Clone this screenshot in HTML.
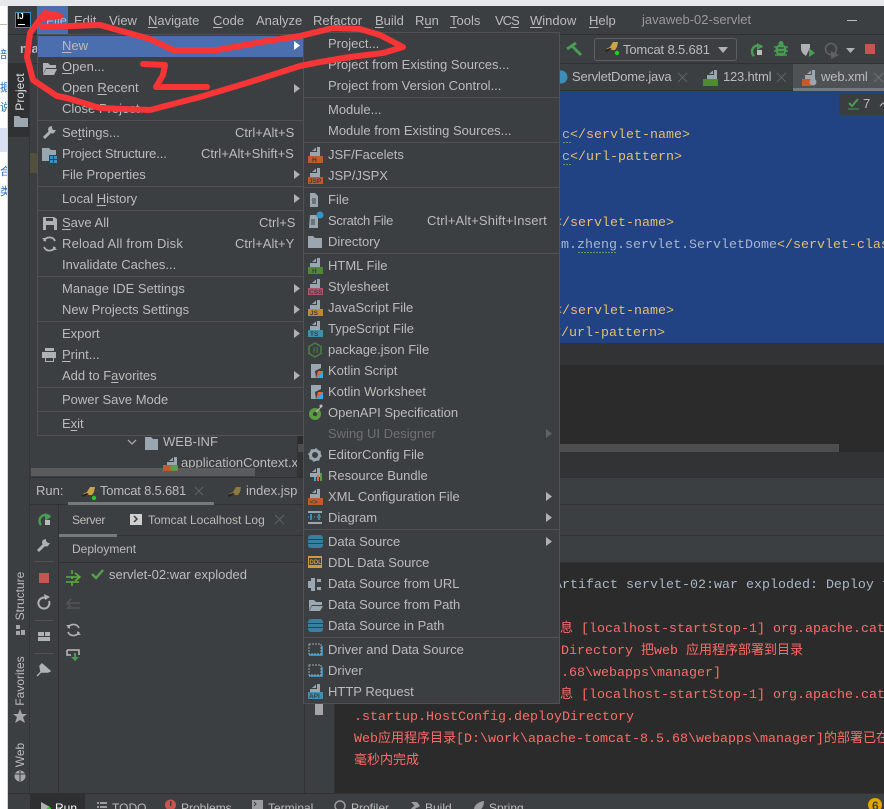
<!DOCTYPE html>
<html><head><meta charset="utf-8"><style>
html,body{margin:0;padding:0;width:884px;height:809px;overflow:hidden;background:#fff}
body{position:relative;font:13px/16px "Liberation Sans","Noto Sans CJK SC",sans-serif;color:#bbb}
div,span.t,svg{position:absolute}
.t{position:absolute;white-space:nowrap;line-height:16px;height:16px}
.c{position:absolute;white-space:pre;font:13.33px/16px "Liberation Mono","Noto Sans CJK SC",monospace;height:16px}
.c i{font:13px/0 "Noto Sans CJK SC",sans-serif}
.g{color:#a9b7c6}.y{color:#e8bf6a}.r{color:#ff6b68}
.sp{position:absolute;height:1px;background:#515151}
.v{position:absolute;white-space:nowrap;transform:rotate(-90deg);transform-origin:center;line-height:14px;height:14px;text-align:center;font-size:12px}
u{text-decoration-thickness:1px;text-underline-offset:2px}
</style></head><body>
<div style="left:0;top:0;width:884px;height:6px;background:#e6e8ea"></div>
<div style="left:0;top:6px;width:8px;height:803px;background:#fff"></div>
<div style="left:7px;top:6px;width:1px;height:803px;background:#d5d5d5"></div>
<div style="left:0;top:24px;width:7px;height:1px;background:#bbb"></div>
<div style="left:0;top:128px;width:7px;height:24px;background:#d9e1f2"></div>
<div class="t" style="left:0;top:47px;width:7px;overflow:hidden;color:#2a6fc0;font-size:11px">部</div>
<div class="t" style="left:0;top:80px;width:7px;overflow:hidden;color:#2a6fc0;font-size:11px">据</div>
<div class="t" style="left:0;top:100px;width:7px;overflow:hidden;color:#2a6fc0;font-size:11px">说</div>
<div class="t" style="left:0;top:164px;width:7px;overflow:hidden;color:#2a6fc0;font-size:11px">合</div>
<div class="t" style="left:0;top:184px;width:7px;overflow:hidden;color:#2a6fc0;font-size:11px">类</div>

<!-- window -->
<div style="left:8px;top:6px;width:876px;height:803px;background:#3c3f41"></div>
<div style="left:8px;top:34px;width:876px;height:1px;background:#2f3133"></div>
<div style="left:8px;top:63px;width:876px;height:1px;background:#2f3133"></div>
<div style="left:8px;top:63px;width:21px;height:74px;background:#2f3133"></div>
<div style="left:29px;top:63px;width:1px;height:730px;background:#323436"></div>
<div class="t" style="left:20px;top:41px;width:18px;overflow:hidden;color:#bbb;font-weight:bold">ma</div>

<!-- title bar -->
<div style="left:37px;top:6px;width:31px;height:28px;background:#4b6eaf"></div>
<div class="t" style="left:46px;top:13px;color:#bbb"><u>F</u>ile</div>
<div class="t" style="left:74px;top:13px">Edit</div>
<div class="t" style="left:109px;top:13px">View</div>
<div class="t" style="left:148px;top:13px"><u>N</u>avigate</div>
<div class="t" style="left:213px;top:13px"><u>C</u>ode</div>
<div class="t" style="left:256px;top:13px">Analyze</div>
<div class="t" style="left:313px;top:13px">Refactor</div>
<div class="t" style="left:375px;top:13px"><u>B</u>uild</div>
<div class="t" style="left:415px;top:13px">R<u>u</u>n</div>
<div class="t" style="left:450px;top:13px"><u>T</u>ools</div>
<div class="t" style="left:495px;top:13px;letter-spacing:-1px">VC<u>S</u></div>
<div class="t" style="left:530px;top:13px"><u>W</u>indow</div>
<div class="t" style="left:589px;top:13px"><u>H</u>elp</div>
<div class="t" style="left:642px;top:12px;color:#999;">javaweb-02-servlet</div>
<div style="left:847px;top:20px;width:10px;height:1px;background:#bbb"></div>
<div style="left:15px;top:12px;width:14px;height:14px;background:#000;border:1px solid #3592c4"></div>
<div class="t" style="left:17px;top:11px;color:#fff;font-size:8px;font-weight:bold;line-height:12px">IJ</div>
<div style="left:18px;top:24px;width:7px;height:1px;background:#fff"></div>

<!-- toolbar -->
<div style="left:594px;top:38px;width:141px;height:21px;border:1px solid #5e6060;border-radius:3px"></div>
<div class="t" style="left:623px;top:42px;letter-spacing:-.15px">Tomcat 8.5.681</div>

<!-- tabs -->
<div style="left:559px;top:90px;width:325px;height:1px;background:#323232"></div>
<div style="left:793px;top:64px;width:91px;height:26px;background:#4e5254"></div>
<div style="left:793px;top:88px;width:91px;height:3px;background:#747a80"></div>
<div class="t" style="left:572px;top:69px;letter-spacing:-.2px">ServletDome.java</div>
<div class="t" style="left:723px;top:69px;letter-spacing:-.2px">123.html</div>
<div class="t" style="left:821px;top:69px;letter-spacing:-.15px">web.xml</div>

<!-- editor -->
<div style="left:304px;top:91px;width:580px;height:252px;background:#214283;overflow:hidden">
 <div class="c" style="left:258px;top:37px"><span class="g">c</span><span class="y">&lt;/servlet-name&gt;</span></div>
 <div class="c" style="left:258px;top:59px"><span class="g">c</span><span class="y">&lt;/url-pattern&gt;</span></div>
 <div class="c" style="left:242px;top:125px"><span class="g">t</span><span class="y">&lt;/servlet-name&gt;</span></div>
 <div class="c" style="left:249px;top:147px"><span class="g">om.zheng.servlet.ServletDome</span><span class="y">&lt;/servlet-class&gt;</span></div>
 <div class="c" style="left:242px;top:213px"><span class="g">t</span><span class="y">&lt;/servlet-name&gt;</span></div>
 <div class="c" style="left:241px;top:235px"><span class="g">t</span><span class="y">&lt;/url-pattern&gt;</span></div>
 <div style="left:535px;top:2px;width:60px;height:22px;background:#3b3e40;border-radius:3px"></div>
 <div class="t" style="left:559px;top:5px">7</div>
</div>
<div style="left:304px;top:343px;width:580px;height:22px;background:#313335"></div>
<div style="left:297px;top:365px;width:587px;height:87px;background:#2b2b2b"></div>
<div style="left:297px;top:444px;width:542px;height:8px;background:#4e4e4e"></div>
<div style="left:297px;top:452px;width:587px;height:26px;background:#313335"></div>
<div style="left:297px;top:365px;width:1px;height:113px;background:#323232"></div>

<!-- project tree remnants -->
<div style="left:30px;top:153px;width:8px;height:20px;background:#52503a"></div>
<div class="t" style="left:163px;top:434px">WEB-INF</div>
<div class="t" style="left:181px;top:455px;width:116px;overflow:hidden">applicationContext.xml</div>
<div style="left:31px;top:468px;width:224px;height:8px;background:#595b5d"></div>
<div style="left:30px;top:477px;width:854px;height:1px;background:#323232"></div>

<!-- run bar -->
<div class="t" style="left:36px;top:483px">Run:</div>
<div class="t" style="left:100px;top:483px;letter-spacing:-.2px">Tomcat 8.5.681</div>
<div class="t" style="left:246px;top:483px">index.jsp</div>
<div style="left:30px;top:504px;width:854px;height:1px;background:#323232"></div>
<div style="left:68px;top:502px;width:146px;height:3px;background:#747a80"></div>
<div style="left:58px;top:505px;width:1px;height:288px;background:#323232"></div>
<div class="t" style="left:72px;top:512px;font-size:12px;letter-spacing:-.4px">Server</div>
<div class="t" style="left:148px;top:512px;font-size:12px">Tomcat Localhost Log</div>
<div style="left:59px;top:535px;width:825px;height:1px;background:#323232"></div>
<div style="left:59px;top:534px;width:58px;height:3px;background:#747a80"></div>
<div class="t" style="left:72px;top:541px;font-size:12px">Deployment</div>
<div style="left:59px;top:562px;width:825px;height:1px;background:#323232"></div>
<div class="t" style="left:109px;top:567px">servlet-02:war exploded</div>
<div style="left:304px;top:563px;width:1px;height:230px;background:#323232"></div>

<!-- console -->
<div style="left:335px;top:563px;width:549px;height:230px;background:#2b2b2b;overflow:hidden">
 <div class="c g" style="left:219px;top:15px">Artifact servlet-02:war exploded: Deploy took</div>
 <div class="c r" style="left:225px;top:59px"><i>息</i> [localhost-startStop-1] org.apache.catalina</div>
 <div class="c r" style="left:226px;top:81px">Directory <i>把</i>web <i>应用程序部署到目录</i></div>
 <div class="c r" style="left:218px;top:103px">5.68\webapps\manager]</div>
 <div class="c r" style="left:225px;top:125px"><i>息</i> [localhost-startStop-1] org.apache.catalina</div>
 <div class="c r" style="left:19px;top:147px">.startup.HostConfig.deployDirectory</div>
 <div class="c r" style="left:19px;top:169px">Web<i>应用程序目录</i>[D:\work\apache-tomcat-8.5.68\webapps\manager]<i>的部署已在</i></div>
 <div class="c r" style="left:19px;top:191px"><i>毫秒内完成</i></div>
</div>
<div style="left:334px;top:563px;width:1px;height:230px;background:#323232"></div>

<!-- left stripe labels -->
<div class="v" style="left:-5px;top:85px;width:50px;color:#ddd">Project</div>
<div class="v" style="left:-10px;top:589px;width:60px">Structure</div>
<div class="v" style="left:-10px;top:674px;width:60px">Favorites</div>
<div class="v" style="left:-10px;top:748px;width:60px">Web</div>

<!-- bottom bar -->
<div style="left:8px;top:793px;width:876px;height:1px;background:#323232"></div>
<div style="left:30px;top:794px;width:55px;height:15px;background:#2d2f30"></div>
<div class="t" style="left:55px;top:800px;color:#fff;font-size:12px">Run</div>
<div class="t" style="left:112px;top:800px;font-size:12px">TODO</div>
<div class="t" style="left:181px;top:800px;font-size:12px">Problems</div>
<div class="t" style="left:268px;top:800px;font-size:12px">Terminal</div>
<div class="t" style="left:351px;top:800px;font-size:12px">Profiler</div>
<div class="t" style="left:425px;top:800px;font-size:12px">Build</div>
<div class="t" style="left:489px;top:800px;font-size:12px">Spring</div>
<div class="t" style="left:872px;top:798px;color:#3c3f41;font-size:12px;z-index:2;font-weight:bold">6</div>

<!-- base icons -->
<svg width="884" height="809" style="left:0;top:0">
<defs>
 <g id="cat"><path d="M1 8l4-2 3-5h5l-1 5-2 3-5 0-3 1z" fill="#c9a34a"/><path d="M0 9l5-2 2 1-6 3z" fill="#222"/><circle cx="12" cy="12" r="2.2" fill="#1fd11f"/></g>
 <g id="catd"><path d="M1 8l4-2 3-5h5l-1 5-2 3-5 0-3 1z" fill="#8f7a3e"/><path d="M0 9l5-2 2 1-6 3z" fill="#222"/></g>
 <path id="fold" d="M0 2h5l2 2h7v9H0z" fill="#9aa7b0"/>
 <g id="ft"><path d="M4 4L8 .5V4z" fill="#9aa7b0"/><path d="M9 0h3v9H2V5h7z" fill="#9aa7b0"/></g>
</defs>
<!-- squiggles -->
<path d="M563 142.500h8M563 164.500h8M578 252.500h39" stroke="#5f9a62" stroke-width="1" stroke-dasharray="2 1"/>
<!-- toolbar icons -->
<path d="M567 49l9-6M572 46l9 9" stroke="#499c54" stroke-width="3" fill="none"/>
<use href="#cat" x="605" y="41"/>
<path d="M718 47h10l-5 6z" fill="#afb1b3"/>
<path d="M762 47a6 6 0 1 0 -8 9" fill="none" stroke="#499c54" stroke-width="2.4"/><path d="M757 43l6 4-6 3z" fill="#499c54"/><rect x="757" y="50" width="5" height="5" fill="#bbb"/>
<ellipse cx="781" cy="50" rx="5.500" ry="6" fill="#499c54"/><path d="M774 47h14M774 51h14M775 55h12" stroke="#499c54" stroke-width="1.400"/><circle cx="781" cy="43.500" r="2.500" fill="#499c54"/><path d="M778 48h6M778 52h6" stroke="#3c3f41" stroke-width="1.200"/>
<path d="M801 44h9v4l-4 8c-3-2-5-4-5-8z" fill="#afb1b3"/><path d="M809 48l6 5-6 4z" fill="#499c54"/>
<circle cx="831" cy="49" r="5.500" fill="none" stroke="#5f6162" stroke-width="1.600"/><path d="M831 51l8 4-8 4z" fill="#5f6162"/>
<path d="M846 48h9l-4.500 5z" fill="#afb1b3"/>
<rect x="865" y="44" width="10" height="10" fill="#c75450"/>
<!-- tab icons -->
<circle cx="561" cy="77" r="6.500" fill="#3b8eb8"/>
<path d="M678 73l9 9M687 73l-9 9" stroke="#5f6264" stroke-width="1"/>
<path d="M777 73l9 9M786 73l-9 9" stroke="#5f6264" stroke-width="1"/>
<path d="M874 73l9 9M883 73l-9 9" stroke="#6e7173" stroke-width="1"/>
<use href="#ft" x="705" y="70"/><rect x="703" y="79" width="15" height="7" fill="#4f8a2f"/>
<use href="#ft" x="803" y="70"/><rect x="802" y="79" width="9" height="7" fill="#c45a2a"/><circle cx="813" cy="82" r="3.500" fill="#9aa7b0"/>
<!-- badge icon -->
<path d="M849 103l3 3 6-7" fill="none" stroke="#499c54" stroke-width="2"/><path d="M848 109h11" stroke="#499c54" stroke-width="1"/>
<path d="M880 106l3-3 3 3" fill="none" stroke="#bbb"/>
<!-- stripe icons -->
<use href="#fold" x="14" y="114"/>
<path d="M16 629h4v-4h-4zM16 635h4v-4h-4zM21 635h4v-5h-4z" fill="#a4a6a8"/>
<path d="M20 709l2 5 5 0-4 3 2 6-5-3-5 3 2-6-4-3 5 0z" fill="#a4a6a8"/>
<circle cx="20" cy="776" r="5.500" fill="#a4a6a8"/><path d="M15 774h10M20 771v10" stroke="#3c3f41" stroke-width="1"/>
<!-- tree -->
<path d="M128 440l4 4 4-4" fill="none" stroke="#a4a6a8" stroke-width="1.300"/>
<path d="M145 437h6l2 2h5v11h-13z" fill="#9aa7b0"/>
<use href="#ft" x="165" y="457"/><rect x="163" y="465" width="15" height="6" fill="#c45a2a"/><ellipse cx="174" cy="468" rx="4" ry="3" fill="#5aa04d"/>
<!-- run bar icons -->
<use href="#cat" x="82" y="486"/><use href="#catd" x="228" y="486"/>
<path d="M195 487l8 8M203 487l-8 8" stroke="#5f6264"/>
<!-- run left toolbar -->
<path d="M50 517a6 6 0 1 0 -9 8" fill="none" stroke="#499c54" stroke-width="2.400"/><path d="M45 513l6 4-6 4z" fill="#499c54"/><rect x="45" y="520" width="5" height="5" fill="#bbb"/>
<path d="M38 551l7-7" stroke="#afb1b3" stroke-width="3"/><path d="M43 540a4 4 0 0 0 5 6l2-3-2 0-2-2 0-2z" fill="#afb1b3"/>
<path d="M34 561.500h20" stroke="#515151"/>
<rect x="39" y="573" width="10" height="10" fill="#c75450"/>
<path d="M49 601a5.500 5.500 0 1 1 -3-3" fill="none" stroke="#afb1b3" stroke-width="2"/><path d="M44 594l6 3-5 3z" fill="#afb1b3"/>
<path d="M34 620.500h20" stroke="#515151"/>
<rect x="38" y="632" width="6" height="4" fill="#afb1b3"/><rect x="45" y="632" width="5" height="4" fill="#afb1b3"/><rect x="38" y="637" width="12" height="4" fill="#afb1b3"/>
<path d="M34 653.500h20" stroke="#515151"/>
<path d="M37 676l7-7M42 664l8 7-2 1-7 0-1-6z" stroke="#afb1b3" fill="#afb1b3" stroke-width="1.400"/>
<!-- server icons -->
<rect x="130" y="514" width="12" height="11" fill="#d0d0d0"/><path d="M134 516l3 3-3 3" fill="none" stroke="#3c3f41" stroke-width="1.500"/>
<path d="M275 515l9 9M284 515l-9 9" stroke="#5f6264"/>
<path d="M66 577h13M66 582h13" stroke="#5ab035" stroke-width="1.500"/><path d="M75 573l5 4-5 4M71 578l2 0" stroke="#5ab035" fill="none" stroke-width="1.500"/><path d="M72 570v4M72 582v4" stroke="#5ab035" stroke-width="1.500"/>
<path d="M92 574l4 4 7-8" fill="none" stroke="#5a9e4f" stroke-width="2.400"/>
<path d="M67 603h13M67 608h13" stroke="#555" stroke-width="1.500"/><path d="M71 599l-4 4 4 4" stroke="#555" fill="none" stroke-width="1.500"/>
<path d="M79 628a6 6 0 0 0-11 0M68 632a6 6 0 0 0 11 0" fill="none" stroke="#afb1b3" stroke-width="1.600"/><path d="M66 625h4v4zM81 635h-4v-4z" fill="#afb1b3"/>
<path d="M67 650h12v5M67 650v5h4" fill="none" stroke="#bbb" stroke-width="1.500"/><path d="M75 653v6" stroke="#499c54" stroke-width="2"/><path d="M71 657h8l-4 4z" fill="#499c54"/>
<!-- trash -->
<path d="M315 704h8v11h-8z" fill="#a4a6a8"/>
<!-- bottom icons -->
<path d="M41 802l9 5-9 5z" fill="#afb1b3"/><circle cx="49" cy="809" r="2" fill="#1fd11f"/>
<path d="M97 802h2v2h-2zM100 802h7v2h-7zM97 806h2v2h-2zM100 806h7v2h-7z" fill="#9a9c9e"/>
<circle cx="170.500" cy="805" r="5.500" fill="#c75450"/><rect x="170" y="801" width="1.500" height="5" fill="#3c3f41"/>
<rect x="252" y="800" width="11" height="10" fill="#9a9c9e"/><path d="M254 802l2 2-2 2" stroke="#3c3f41" fill="none"/>
<circle cx="340" cy="806" r="5" fill="none" stroke="#9a9c9e" stroke-width="1.500"/>
<path d="M410 812l6-6" stroke="#9a9c9e" stroke-width="3"/><path d="M411 802l6 0 3 4-3 2z" fill="#9a9c9e"/>
<path d="M474 810c0-5 4-8 10-9 0 6-3 10-8 10z" fill="#9a9c9e"/>
<circle cx="875" cy="805" r="7" fill="#e5a400"/>
</svg>

<!-- LEFT MENU -->
<div style="left:37px;top:34px;width:266px;height:400px;background:#3c3f41;border:1px solid #515151">
 <div style="left:0;top:1px;width:266px;height:21px;background:#4b6eaf"></div>
</div>
<div class="t" style="left:62px;top:38px;color:#bbb"><u>N</u>ew</div>
<div class="t" style="left:62px;top:59px"><u>O</u>pen...</div>
<div class="t" style="left:62px;top:80px">Open <u>R</u>ecent</div>
<div class="t" style="left:62px;top:101px">Close Project</div>
<div class="sp" style="left:38px;top:120px;width:266px"></div>
<div class="t" style="left:62px;top:125px">Se<u>t</u>tings...</div><div class="t" style="left:235px;top:125px">Ctrl+Alt+S</div>
<div class="t" style="left:62px;top:146px;letter-spacing:-.15px">Project Structure...</div><div class="t" style="left:201px;top:146px">Ctrl+Alt+Shift+S</div>
<div class="t" style="left:62px;top:167px">File Properties</div>
<div class="sp" style="left:38px;top:186px;width:266px"></div>
<div class="t" style="left:62px;top:191px">Local <u>H</u>istory</div>
<div class="sp" style="left:38px;top:210px;width:266px"></div>
<div class="t" style="left:62px;top:215px"><u>S</u>ave All</div><div class="t" style="left:259px;top:215px">Ctrl+S</div>
<div class="t" style="left:62px;top:236px;letter-spacing:.2px">Reload All from Disk</div><div class="t" style="left:235px;top:236px">Ctrl+Alt+Y</div>
<div class="t" style="left:62px;top:257px">Invalidate Caches...</div>
<div class="sp" style="left:38px;top:276px;width:266px"></div>
<div class="t" style="left:62px;top:281px">Manage IDE Settings</div>
<div class="t" style="left:62px;top:302px">New Projects Settings</div>
<div class="sp" style="left:38px;top:321px;width:266px"></div>
<div class="t" style="left:62px;top:326px">Export</div>
<div class="t" style="left:62px;top:347px"><u>P</u>rint...</div>
<div class="t" style="left:62px;top:368px">Add to F<u>a</u>vorites</div>
<div class="sp" style="left:38px;top:387px;width:266px"></div>
<div class="t" style="left:62px;top:392px">Power Save Mode</div>
<div class="sp" style="left:38px;top:411px;width:266px"></div>
<div class="t" style="left:62px;top:416px">E<u>x</u>it</div>

<!-- RIGHT MENU -->
<div style="left:303px;top:32px;width:255px;height:670px;background:#3c3f41;border:1px solid #515151"></div>
<div class="t" style="left:328px;top:36px">Project...</div>
<div class="t" style="left:328px;top:57px">Project from Existing Sources...</div>
<div class="t" style="left:328px;top:78px">Project from Version Control...</div>
<div class="sp" style="left:304px;top:97px;width:255px"></div>
<div class="t" style="left:328px;top:102px">Module...</div>
<div class="t" style="left:328px;top:123px">Module from Existing Sources...</div>
<div class="sp" style="left:304px;top:142px;width:255px"></div>
<div class="t" style="left:328px;top:147px">JSF/Facelets</div>
<div class="t" style="left:328px;top:168px">JSP/JSPX</div>
<div class="sp" style="left:304px;top:187px;width:255px"></div>
<div class="t" style="left:328px;top:192px">File</div>
<div class="t" style="left:328px;top:213px;letter-spacing:-.3px">Scratch File</div><div class="t" style="left:427px;top:213px;letter-spacing:.15px">Ctrl+Alt+Shift+Insert</div>
<div class="t" style="left:328px;top:234px">Directory</div>
<div class="sp" style="left:304px;top:253px;width:255px"></div>
<div class="t" style="left:328px;top:258px">HTML File</div>
<div class="t" style="left:328px;top:279px">Stylesheet</div>
<div class="t" style="left:328px;top:300px">JavaScript File</div>
<div class="t" style="left:328px;top:321px">TypeScript File</div>
<div class="t" style="left:328px;top:342px">package.json File</div>
<div class="t" style="left:328px;top:363px">Kotlin Script</div>
<div class="t" style="left:328px;top:384px">Kotlin Worksheet</div>
<div class="t" style="left:328px;top:405px">OpenAPI Specification</div>
<div class="t" style="left:328px;top:426px;color:#6e7072">Swing UI Designer</div>
<div class="t" style="left:328px;top:447px">EditorConfig File</div>
<div class="t" style="left:328px;top:468px">Resource Bundle</div>
<div class="t" style="left:328px;top:489px">XML Configuration File</div>
<div class="t" style="left:328px;top:510px">Diagram</div>
<div class="sp" style="left:304px;top:529px;width:255px"></div>
<div class="t" style="left:328px;top:534px">Data Source</div>
<div class="t" style="left:328px;top:555px">DDL Data Source</div>
<div class="t" style="left:328px;top:576px">Data Source from URL</div>
<div class="t" style="left:328px;top:597px">Data Source from Path</div>
<div class="t" style="left:328px;top:618px">Data Source in Path</div>
<div class="sp" style="left:304px;top:637px;width:255px"></div>
<div class="t" style="left:328px;top:642px">Driver and Data Source</div>
<div class="t" style="left:328px;top:663px">Driver</div>
<div class="t" style="left:328px;top:684px">HTTP Request</div>

<!-- menu icons -->
<svg width="884" height="809" style="left:0;top:0">
<defs>
 <g id="arr"><path d="M0 0l6 4.500-6 4.500z"/></g>
 <g id="db"><rect x="0" y="0" width="15" height="13" rx="3" fill="#3a7f9f"/><path d="M0 4.500h15M0 8.500h15" stroke="#3c3f41"/></g>
 <g id="drv"><rect x="1" y="1" width="12" height="10" fill="#3c3f41" stroke="#9aa7b0" stroke-dasharray="2 1"/><path d="M1 12h13V3" fill="none" stroke="#3ba9e0" stroke-width="1.500"/></g>
 <g id="ftb"><path d="M5 4L9 .5V4z" fill="#9aa7b0"/><path d="M10 0h3v9H3V5h7z" fill="#9aa7b0"/></g>
 <g id="kt"><path d="M3 0h10v4l-6 3 1 7H3z" fill="#9aa7b0"/><path d="M8 14l7-7v7z" fill="#3ba9e0"/><path d="M8 14l7-7H10z" fill="#e8673c"/></g>
</defs>
<g fill="#afb1b3">
<use href="#arr" x="294" y="84"/>
<use href="#arr" x="294" y="170"/><use href="#arr" x="294" y="194"/><use href="#arr" x="294" y="284"/><use href="#arr" x="294" y="305"/><use href="#arr" x="294" y="329"/><use href="#arr" x="294" y="371"/>
<use href="#arr" x="546" y="492"/><use href="#arr" x="546" y="513"/><use href="#arr" x="546" y="537"/>
</g>
<use href="#arr" x="294" y="41" fill="#fff"/>
<use href="#arr" x="546" y="429" fill="#5f6264"/>
<!-- left icons -->
<path d="M43 63h5l2 2h6v3H46l-3 6z" fill="#afb1b3"/><path d="M46 69h11l-3 6H43z" fill="#afb1b3"/>
<path d="M44 138l7-7" stroke="#afb1b3" stroke-width="3"/><path d="M49 127a4 4 0 0 0 5 6l2-3-3 0-1-2 0-2z" fill="#afb1b3"/>
<path d="M42 148h7l2 2h5v11H42z" fill="#9aa7b0"/><rect x="49" y="155" width="8" height="7" fill="#3c3f41"/><rect x="50" y="156" width="3" height="3" fill="#3592c4"/><rect x="54" y="156" width="3" height="3" fill="#3592c4"/><rect x="50" y="160" width="3" height="3" fill="#3592c4"/><rect x="54" y="160" width="3" height="3" fill="#3592c4"/>
<path d="M43 217h11l3 2v11H43z" fill="#afb1b3"/><rect x="46" y="218" width="7" height="3" fill="#3c3f41"/><rect x="46" y="225" width="8" height="5" fill="#3c3f41"/>
<path d="M55 241a6 6 0 0 0-11 0M44 247a6 6 0 0 0 11 0" fill="none" stroke="#afb1b3" stroke-width="1.800"/><path d="M42 238h4v4zM57 250h-4v-4z" fill="#afb1b3"/>
<path d="M45 348h9v3h-9zM42 352h14v6H42zM45 358h9v4h-9z" fill="#afb1b3"/><rect x="46" y="358" width="7" height="3" fill="#3c3f41"/>
<!-- right icons -->
<use href="#ftb" x="307" y="147"/><rect x="308" y="156" width="15" height="7" fill="#c45a2a"/>
<use href="#ftb" x="307" y="168"/><rect x="308" y="177" width="15" height="7" fill="#c45a2a"/>
<path d="M310 193h5l3 3v11h-8z" fill="#9aa7b0"/><path d="M312 199h4M312 201h4M312 203h4" stroke="#3c3f41"/>
<path d="M310 215h6l2 2v11h-9z" fill="#9aa7b0"/><path d="M311 220h4M311 222h4M311 224h4" stroke="#3c3f41"/><circle cx="320" cy="215" r="3.500" fill="#3592c4"/>
<path d="M308 236h5l2 2h7v10h-14z" fill="#9aa7b0"/>
<use href="#ftb" x="307" y="258"/><rect x="308" y="267" width="15" height="7" fill="#4f8a2f"/>
<use href="#ftb" x="307" y="279"/><rect x="308" y="288" width="15" height="7" fill="#b0566b"/>
<use href="#ftb" x="307" y="300"/><rect x="308" y="309" width="15" height="7" fill="#c28a30"/>
<use href="#ftb" x="307" y="321"/><rect x="308" y="330" width="15" height="7" fill="#3f8fb0"/>
<path d="M315 343l6 3.500v7l-6 3.500-6-3.500v-7z" fill="none" stroke="#4d8042" stroke-width="1.500"/><path d="M314 347v6M317 347v6" stroke="#4d8042"/>
<use href="#kt" x="308" y="364"/><use href="#kt" x="308" y="385"/>
<circle cx="315" cy="414" r="6" fill="#5a9e3f"/><circle cx="315" cy="414" r="2.200" fill="#3c3f41"/><path d="M316 412l5-5" stroke="#bbb" stroke-width="1.200"/><circle cx="321" cy="406" r="1.500" fill="#bbb"/>
<circle cx="315" cy="455" r="4.500" fill="none" stroke="#9aa7b0" stroke-width="3"/><circle cx="315" cy="455" r="6" fill="none" stroke="#9aa7b0" stroke-width="1.500" stroke-dasharray="2 2.700"/>
<use href="#ftb" x="307" y="468"/><rect x="314" y="477" width="2" height="4" fill="#3ba9e0"/><rect x="317" y="475" width="2" height="6" fill="#e8673c"/><rect x="320" y="473" width="2" height="8" fill="#5a9e3f"/>
<use href="#ftb" x="307" y="489"/><rect x="308" y="498" width="15" height="7" fill="#c45a2a"/>
<rect x="308" y="511" width="14" height="2" fill="#9aa7b0"/><rect x="308" y="522" width="14" height="2" fill="#9aa7b0"/><path d="M311 514v6M319 514v6" stroke="#3ba9e0" stroke-width="1.400"/><path d="M308 517h14" stroke="#3ba9e0" stroke-dasharray="1 2"/>
<use href="#db" x="308" y="535"/>
<rect x="308" y="556" width="14" height="12" fill="#d09a3a"/><rect x="309" y="558" width="12" height="7" fill="#3c3f41"/>
<path d="M308 581h3v-3h4v13h-4v-3h-3z" fill="#9aa7b0"/><path d="M317 579h4v3h-4zM317 587h4v3h-4z" fill="#9aa7b0"/>
<path d="M309 600h5l2 2h6v3h-10l-3 5z" fill="#9aa7b0"/><path d="M312 606h11l-3 5h-11z" fill="#9aa7b0"/>
<use href="#db" x="308" y="619"/>
<use href="#drv" x="308" y="643"/><use href="#drv" x="308" y="664"/>
<use href="#ftb" x="307" y="684"/><rect x="308" y="692" width="15" height="7" fill="#3f8fb0"/>
<g font-family="Liberation Sans" font-size="6.500" font-weight="bold" fill="#3c3f41">
<text x="312" y="162">H</text><text x="309" y="183">JSP</text><text x="312" y="273">H</text><text x="309" y="294">CSS</text><text x="310" y="315">JS</text><text x="310" y="336">TS</text><text x="310" y="504">&lt;&gt;</text><text x="309" y="698">API</text>
</g>
<text x="309.500" y="564" font-family="Liberation Sans" font-size="6" font-weight="bold" fill="#d09a3a">DDL</text>
</svg>

<!-- red scribble -->
<svg width="884" height="809" style="left:0;top:0">
<g fill="none" stroke="#f73536" stroke-width="6" stroke-linecap="round" stroke-linejoin="round">
<path d="M43 15L30 33L27 57L33 80L57 96L67 98L100 108L150 110L200 97L250 82L300 66L320 62L350 57L383 53L403 47L380 35L360 29L333 28L300 36L267 41L217 50L173 50L150 39L100 25L42 27"/>
<path d="M143 64L165 65L163 75L156 87L207 87"/>
<path d="M45 13L60 16L43 18"/>
</g>
</svg>
</body></html>
